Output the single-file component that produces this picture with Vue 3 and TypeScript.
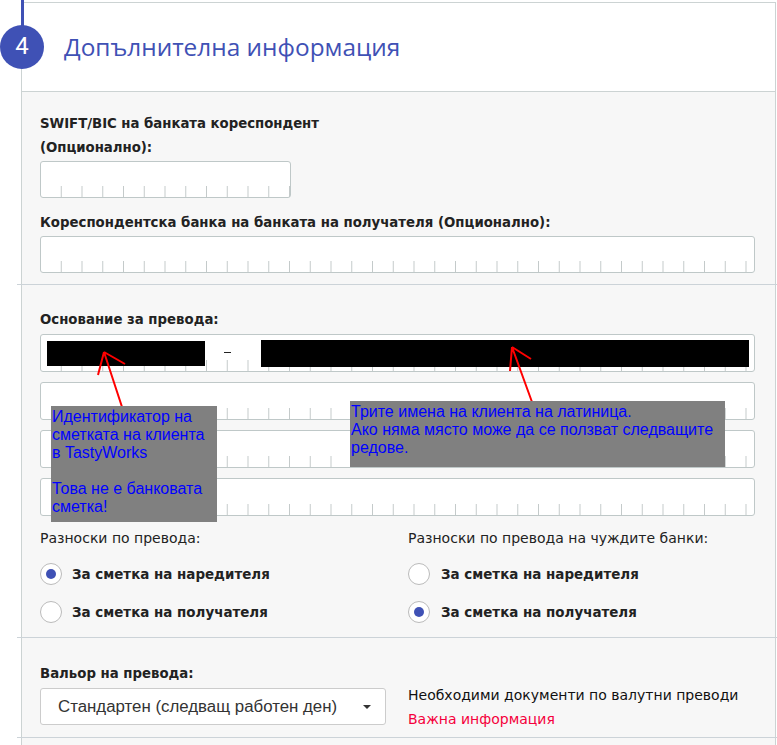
<script setup lang="ts">
const purposeRows = [0, 1, 2]
const radioGroups = [
  { title: 'Разноски по превода:', checked: 0 },
  { title: 'Разноски по превода на чуждите банки:', checked: 1 },
]
const radioOptions = ['За сметка на наредителя', 'За сметка на получателя']
</script>

<template>
  <div class="page">
    <div class="stem"></div>
    <div class="card">
      <header class="head">
        <span class="step">4</span>
        <h2 class="title">Допълнителна информация</h2>
      </header>
      <section class="sec sec-a">
        <label class="lbl swift">SWIFT/BIC на банката кореспондент<br />(Опционално):</label>
        <div class="inp inp-short"></div>
        <label class="lbl corr">Кореспондентска банка на банката на получателя (Опционално):</label>
        <div class="inp"></div>
      </section>
      <section class="sec sec-b">
        <label class="lbl">Основание за превода:</label>
        <div class="inp first"></div>
        <div v-for="r in purposeRows" :key="r" class="inp more"></div>
        <div class="radios">
          <div v-for="(g, gi) in radioGroups" :key="gi" class="rgroup">
            <div class="rtitle">{{ g.title }}</div>
            <div v-for="(o, oi) in radioOptions" :key="oi" class="ropt">
              <span class="radio" :class="{ on: g.checked === oi }"></span>
              <span class="rtext">{{ o }}</span>
            </div>
          </div>
        </div>
      </section>
      <section class="sec sec-c">
        <div class="val">
          <label class="lbl">Вальор на превода:</label>
          <div class="select">
            <span>Стандартен (следващ работен ден)</span>
            <i class="caret"></i>
          </div>
        </div>
        <div class="docs">
          <div>Необходими документи по валутни преводи</div>
          <div class="warn">Важна информация</div>
        </div>
      </section>
    </div>

    <div class="mask mask-1"></div>
    <div class="dash"></div>
    <div class="mask mask-2"></div>
    <svg class="arrows" width="777" height="745" viewBox="0 0 777 745" fill="none" stroke="#ff0000" stroke-width="2">
      <path d="M123 410 L104 352 M104 352 L98 375 M104 352 L125 364" />
      <path d="M532 402 L512 347 M512 347 L510 371 M512 347 L531 359" />
    </svg>
    <div class="note note-1">Идентификатор на<br />сметката на клиента<br />в TastyWorks<br /><br />Това не е банковата<br />сметка!</div>
    <div class="note note-2">Трите имена на клиента на латиница.<br />Ако няма място може да се ползват следващите<br />редове.</div>
  </div>
</template>

<style>
html, body { margin: 0; background: #fff; overflow: hidden; }
</style>

<style scoped>
.page {
  position: relative;
  width: 777px;
  height: 745px;
  overflow: hidden;
  background: #fff;
  font-family: "DejaVu Sans", sans-serif;
  color: #222;
}
.stem {
  position: absolute;
  z-index: 2;
  left: 21px;
  top: 0;
  width: 3px;
  height: 26px;
  background: #3f51b5;
}
.card {
  margin: 2px 1px 0 21px;
  border-top: 1px solid #ccd3d3;
  border-left: 1px solid #ccd3d3;
  border-right: 1px solid #ccd3d3;
  background: #f7f7f7;
  height: 800px;
}
.head {
  height: 88px;
  background: #fff;
  border-bottom: 1px solid #ccd3d3;
  display: flex;
  align-items: center;
  position: relative;
  padding-left: 42px;
}
.step {
  position: absolute;
  left: -22px;
  top: 22px;
  width: 44px;
  height: 44px;
  border-radius: 50%;
  background: #3f51b5;
  color: #fff;
  font: 24px/43px Roboto, sans-serif;
  text-align: center;
}
.title {
  margin: 0;
  font: 400 24.4px/1.2 "Open Sans", sans-serif;
  color: #3f51b5;
}
.sec {
  padding-left: 18px;
  padding-right: 20px;
  box-sizing: border-box;
  position: relative;
}
.sec::after {
  content: "";
  position: absolute;
  left: -5px;
  right: -2px;
  bottom: 0;
  height: 1px;
  background: #ccd3d8;
}
.sec-a { height: 193px; padding-top: 20px; }
.sec-b { height: 353px; padding-top: 23px; }
.sec-c { height: 100px; padding-top: 24px; display: flex; }
.lbl {
  display: block;
  font-size: 13.3px;
  line-height: 24px;
  font-weight: 700;
  color: #222;
}
.swift { margin-bottom: 1px; letter-spacing: -0.03px; }
.corr { margin-top: 13px; margin-bottom: 1px; }
.inp {
  box-sizing: border-box;
  height: 37px;
  margin-top: 1px;
  border: 1px solid #bfc8c8;
  border-radius: 3px;
  background-color: #fff;
  background-image: linear-gradient(to right, transparent 19.75px, #c4caca 19.75px);
  background-size: 20.75px 11px;
  background-repeat: repeat-x;
  background-position: 0 bottom;
}
.inp-short { width: 251px; }
.first { height: 38px; margin-top: 2px; }
.more { height: 38px; margin-top: 10px; }
.radios { display: flex; margin-top: 10px; }
.rgroup { flex: 0 0 368px; }
.rgroup:nth-child(2) .radio { margin-right: 11px; }
.rtitle { font-size: 14px; line-height: 24px; color: #222; margin-bottom: 5px; }
.ropt { display: flex; align-items: center; height: 38px; }
.radio {
  box-sizing: border-box;
  width: 22px;
  height: 22px;
  border: 1px solid #bbb;
  border-radius: 50%;
  background: #fff;
  position: relative;
  margin-right: 10px;
}
.radio.on::after {
  content: "";
  position: absolute;
  left: 5px;
  top: 5px;
  width: 10px;
  height: 10px;
  border-radius: 50%;
  background: #3f51b5;
}
.rtext { font-size: 13.45px; font-weight: 700; color: #222; }
.val { flex: 0 0 368px; }
.select {
  box-sizing: border-box;
  width: 346px;
  height: 37px;
  margin-top: 2px;
  padding: 0 14px 0 17px;
  background: #fff;
  border: 1px solid #ccc;
  border-radius: 3px;
  display: flex;
  align-items: center;
  justify-content: space-between;
  font: 16.85px "Liberation Sans", sans-serif;
  color: #333;
}
.caret {
  width: 0;
  height: 0;
  border-left: 4px solid transparent;
  border-right: 4px solid transparent;
  border-top: 4px solid #333;
}
.docs { font-size: 14px; line-height: 24px; color: #111; padding-top: 21px; white-space: nowrap; }
.warn { color: #f5003c; }

.mask { position: absolute; background: #000; }
.mask-1 { left: 47px; top: 341px; width: 158px; height: 25px; }
.mask-2 { left: 261px; top: 340px; width: 488px; height: 27px; }
.dash { position: absolute; left: 224px; top: 352px; width: 7px; height: 1px; background: #222; }
.arrows { position: absolute; left: 0; top: 0; pointer-events: none; }
.note {
  position: absolute;
  box-sizing: border-box;
  background: #808080;
  color: #0000ff;
  font: 16px/18px "Liberation Sans", sans-serif;
  padding: 2px 1px;
}
.note-1 { left: 51px; top: 406px; width: 166px; height: 116px; }
.note-2 { left: 350px; top: 401px; width: 375px; height: 66px; }
</style>
